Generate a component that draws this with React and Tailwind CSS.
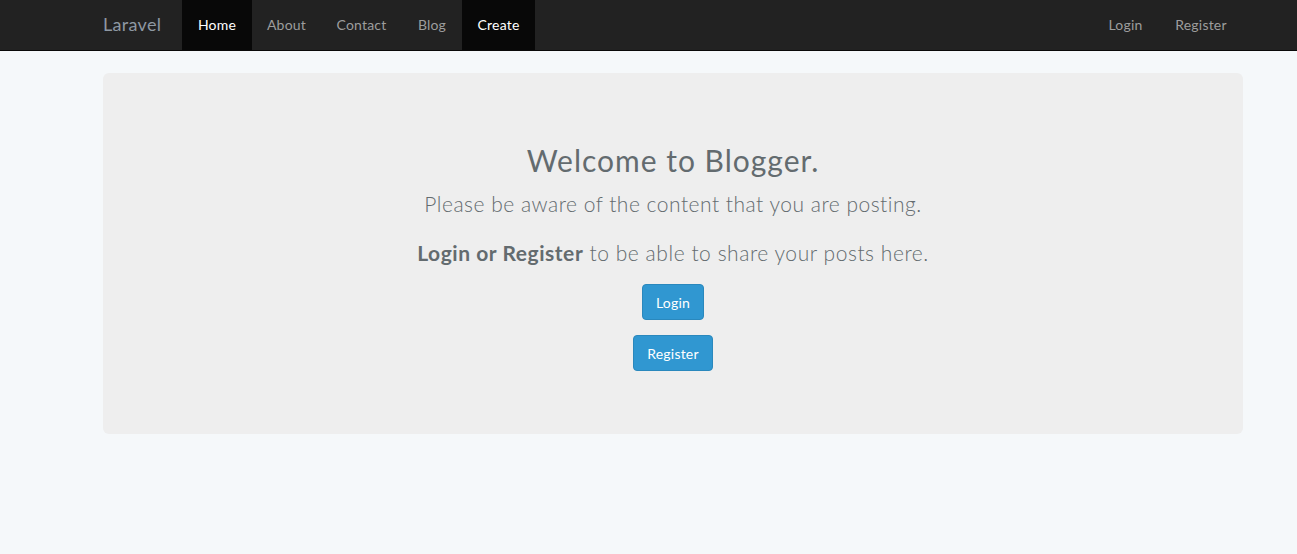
export default function App() {
  const font = { fontFamily: "Lato, 'Open Sans', sans-serif" };
  return (
    <div className="min-h-[554px] bg-[#f5f8fa] text-[#636b6f]" style={font}>
      <nav className="h-[51px] bg-[#222222] border-b border-[#090909]">
        <div className="ml-[88px] w-[1170px] px-[15px] h-[50px] flex items-stretch">
          <a className="h-[50px] pb-[2px] flex items-center w-[79px] text-[18px] tracking-[0.3px] text-[#8e98a3]">Laravel</a>
          <ul className="flex h-[50px] text-[14px] tracking-[0.2px]">
            <li className="w-[70px] pb-[2px] flex items-center justify-center bg-[#080808] text-white">Home</li>
            <li className="w-[69px] pb-[2px] flex items-center justify-center text-[#9d9d9d]">About</li>
            <li className="w-[81px] pb-[2px] flex items-center justify-center text-[#9d9d9d]">Contact</li>
            <li className="w-[60px] pb-[2px] flex items-center justify-center text-[#9d9d9d]">Blog</li>
            <li className="w-[73px] pb-[2px] flex items-center justify-center bg-[#080808] text-white">Create</li>
          </ul>
          <ul className="ml-auto flex h-[50px] text-[14px] tracking-[0.2px]">
            <li className="w-[67px] pb-[2px] flex items-center justify-center text-[#9d9d9d]">Login</li>
            <li className="w-[84px] pb-[2px] flex items-center justify-center text-[#9d9d9d]">Register</li>
          </ul>
        </div>
      </nav>
      <div className="ml-[88px] w-[1170px] px-[15px] pt-[22px]">
        <div className="bg-[#eeeeee] rounded-[6px] pt-[48px] pb-[48px] px-[60px] flex flex-col items-center text-center">
          <h1 className="mt-[22px] mb-[10px] text-[30px] leading-[34px] tracking-[1px] text-[#636b6f]">Welcome to Blogger.</h1>
          <p className="mb-[15px] text-[21px] leading-[33.6px] font-light tracking-[0.5px]">Please be aware of the content that you are posting.</p>
          <p className="mb-[15px] text-[21px] leading-[33.6px] font-light tracking-[0.55px]">
            <strong className="font-bold">Login or Register</strong> to be able to share your posts here.
          </p>
          <div className="mb-[15px] h-[36px] flex items-center">
            <button className="h-[36px] w-[62px] rounded-[4px] bg-[#3097d1] border border-[#2a88bd] text-white text-[14px] tracking-[0.2px]">Login</button>
          </div>
          <div className="mb-[15px] h-[36px] flex items-center">
            <button className="h-[36px] w-[80px] rounded-[4px] bg-[#3097d1] border border-[#2a88bd] text-white text-[14px] tracking-[0.2px]">Register</button>
          </div>
        </div>
      </div>
    </div>
  );
}
